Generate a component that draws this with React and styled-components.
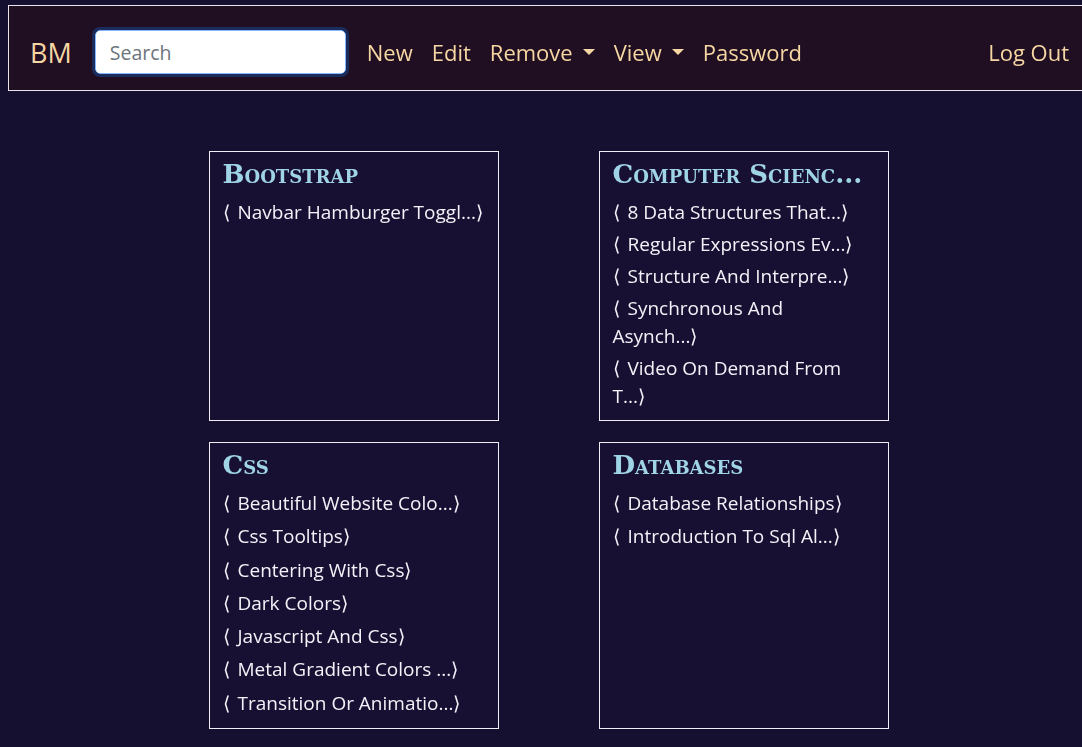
import React from 'react';
import styled, { createGlobalStyle } from 'styled-components';

const groups = [
  {
    title: 'Bootstrap',
    gap: 6,
    links: ['Navbar Hamburger Toggl...'],
  },
  {
    title: 'Computer Scienc...',
    gap: 4,
    links: [
      '8 Data Structures That...',
      'Regular Expressions Ev...',
      'Structure And Interpre...',
      'Synchronous And\nAsynch...',
      'Video On Demand From\nT...',
    ],
  },
  {
    title: 'Css',
    gap: 5.25,
    links: [
      'Beautiful Website Colo...',
      'Css Tooltips',
      'Centering With Css',
      'Dark Colors',
      'Javascript And Css',
      'Metal Gradient Colors ...',
      'Transition Or Animatio...',
    ],
  },
  {
    title: 'Databases',
    gap: 5.25,
    links: ['Database Relationships', 'Introduction To Sql Al...'],
  },
];

function App() {
  return (
    <>
      <GlobalStyle />
      <Page>
        <Navbar>
          <Brand>BM</Brand>
          <Search type="text" placeholder="Search" autoFocus />
          <Menu>
            <NavLink>New</NavLink>
            <NavLink>Edit</NavLink>
            <NavLink $caret>Remove</NavLink>
            <NavLink $caret>View</NavLink>
            <NavLink>Password</NavLink>
          </Menu>
          <NavLink>Log Out</NavLink>
        </Navbar>
        <Grid>
          {groups.map(g => (
            <Card key={g.title}>
              <Title>{g.title}</Title>
              {g.links.map(l => (
                <Item key={l} $gap={g.gap}>
                  <Bracket>⟨</Bracket>
                  {l}⟩
                </Item>
              ))}
            </Card>
          ))}
        </Grid>
      </Page>
    </>
  );
}

const GlobalStyle = createGlobalStyle`
  body {
    margin: 0;
    background: #150f30;
    font-family: "Open Sans", "Noto Sans", sans-serif;
  }
`;

const Page = styled.div`
  width: 1097px;
  padding: 5px 8px 0;
  box-sizing: border-box;
`;

const Navbar = styled.nav`
  display: flex;
  align-items: center;
  height: 86px;
  box-sizing: border-box;
  padding: 8px 19px 0 21px;
  background: #200f22;
  border: 1px solid #e8e4ea;
`;

const Brand = styled.div`
  color: #f6d6a2;
  font-size: 27px;
  margin-right: 23px;
`;

const Search = styled.input`
  width: 251px;
  height: 44px;
  box-sizing: border-box;
  padding: 0 14px;
  font-family: inherit;
  font-size: 19.5px;
  border: 1px solid #86b7fe;
  border-radius: 5px;
  outline: 3px solid #1a2c5c;
  margin-right: 21px;
  &::placeholder {
    color: #6c757d;
  }
`;

const Menu = styled.div`
  display: flex;
  gap: 19px;
  flex: 1;
`;

const NavLink = styled.span`
  color: #f6d6a2;
  font-size: 22px;
  display: flex;
  align-items: center;
  &::after {
    content: ${p => (p.$caret ? '""' : 'none')};
    margin-left: 10px;
    border-top: 6px solid #f6d6a2;
    border-left: 6px solid transparent;
    border-right: 6px solid transparent;
  }
`;

const Grid = styled.div`
  display: grid;
  grid-template-columns: 290px 290px;
  column-gap: 100px;
  row-gap: 21px;
  justify-content: center;
  margin-top: 60px;
`;

const Card = styled.div`
  background: #181033;
  border: 1px solid #f0eef4;
  padding: 6px 8px 6px 13px;
`;

const Title = styled.h2`
  margin: 0 0 8px;
  color: #9fd3e6;
  font-family: "DejaVu Serif", serif;
  font-variant: small-caps;
  font-weight: bold;
  font-size: 26px;
  line-height: 32px;
  white-space: nowrap;
`;

const Item = styled.div`
  color: #f4f2f8;
  font-size: 19px;
  line-height: 28px;
  white-space: pre-line;
  margin-bottom: ${p => p.$gap}px;
`;

const Bracket = styled.span`
  margin-right: 8px;
`;

export default App;
